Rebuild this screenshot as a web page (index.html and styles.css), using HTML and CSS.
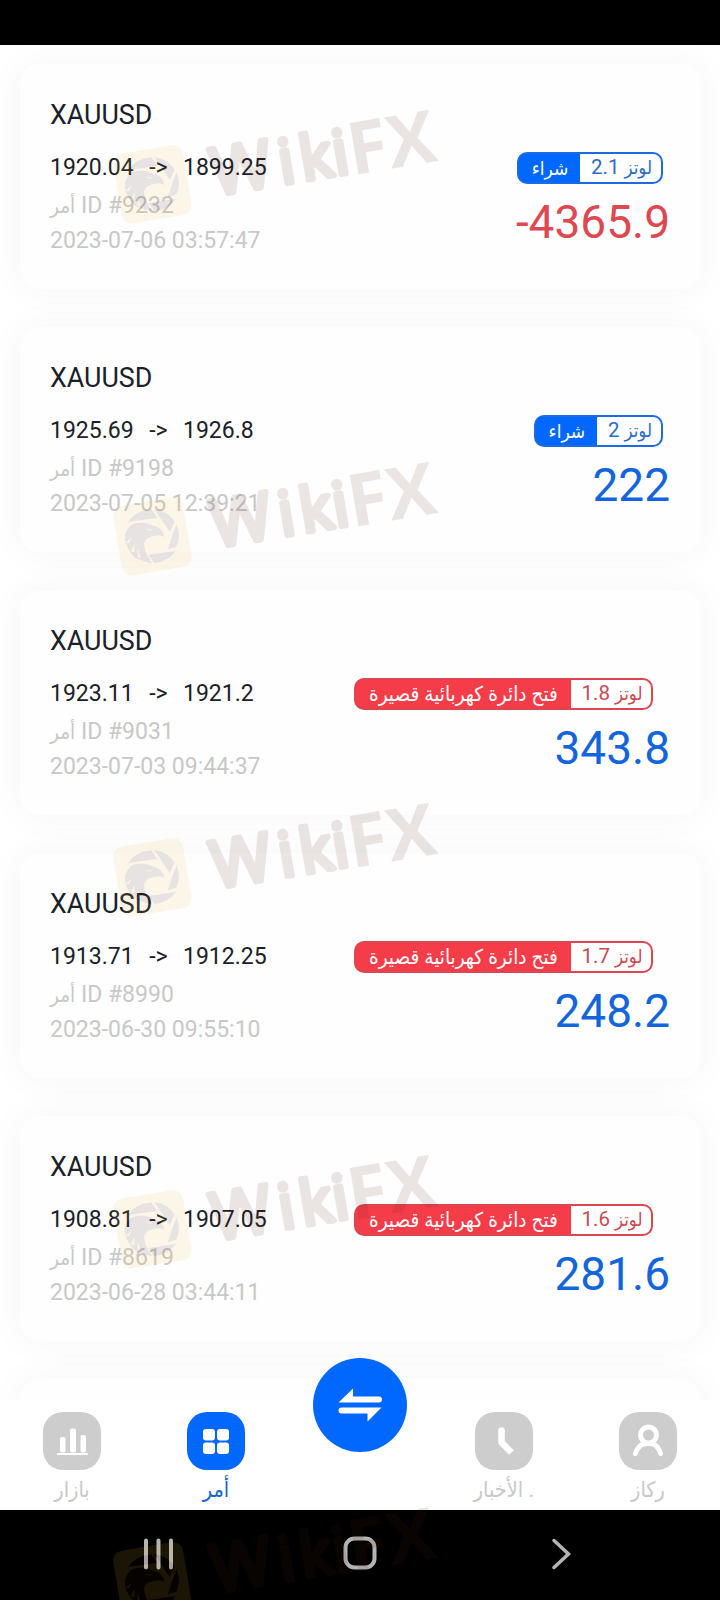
FILE: index.html
```
<!DOCTYPE html>
<html lang="ar">
<head>
    <meta charset="UTF-8">
    <meta name="viewport" content="width=device-width, initial-scale=1.0">
    <title>Orders</title>
    <link rel="stylesheet" href="styles.css">
</head>

<body>
    <svg class="defs">
        <symbol id="mark" viewBox="0 40 1080 400">
            <g opacity="0.11">
                <g transform="rotate(-9.5 157 290)">
                    <rect x="51" y="184" width="212" height="212" rx="30" fill="#f0be3c"/>
                </g>
                <g fill="#3c1418">
                    <path d="M84 247 Q106 213 154 209 L172 235 Z"/>
                    <path d="M163 208 Q203 213 224 246 L209 277 Z"/>
                    <path d="M229 253 Q245 290 229 321 L203 329 Z"/>
                    <path d="M146 346 L228 333 Q205 366 162 370 Z"/>
                    <path d="M75 286 Q82 253 112 250 Q134 245 155 256 Q188 262 193 292 Q180 283 163 289 Q134 294 132 312 Q133 340 156 370 Q134 369 118 358 Q108 362 90 336 Q72 312 75 286 Z"/>
                </g>
                <path d="M133 266 Q145 272 156 268 Q151 278 133 266 Z M77 309 L95 294 L86 311 Z M93 337 L103 311 L103 336 Z M113 356 L113 328 L122 352 Z" fill="#f0be3c"/>
                <g class="mark-text" transform="rotate(-9.5)">
                    <text class="round" y="376" font-size="196" x="287">W</text>
                    <text class="round" y="376" font-size="184" x="491">i</text>
                    <text class="round" y="376" font-size="184" x="555">k</text>
                    <text class="round" y="376" font-size="184" x="655">i</text>
                    <text class="heavy" y="384" font-size="218" x="702">F</text>
                    <text class="heavy" y="384" font-size="218" x="822">X</text>
                </g>
            </g>
        </symbol>
    </svg>

    <div class="phone">
        <div class="status-bar"></div>

        <div class="list">
            <div class="card">
                <div class="info">
                    <div class="symbol">XAUUSD</div>
                    <div class="prices"><span>1920.04</span><span>-&gt;</span><span>1899.25</span></div>
                    <div class="order"><span class="ar">أمر</span> ID #9232</div>
                    <div class="date">2023-07-06 03:57:47</div>
                </div>
                <div class="result">
                    <div class="badge buy">
                        <div class="side">شراء</div>
                        <div class="lots">2.1 <span class="ar">لوتز</span></div>
                    </div>
                    <div class="amount minus">-4365.9</div>
                </div>
            </div>

            <div class="card">
                <div class="info">
                    <div class="symbol">XAUUSD</div>
                    <div class="prices"><span>1925.69</span><span>-&gt;</span><span>1926.8</span></div>
                    <div class="order"><span class="ar">أمر</span> ID #9198</div>
                    <div class="date">2023-07-05 12:39:21</div>
                </div>
                <div class="result">
                    <div class="badge buy">
                        <div class="side">شراء</div>
                        <div class="lots">2 <span class="ar">لوتز</span></div>
                    </div>
                    <div class="amount">222</div>
                </div>
            </div>

            <div class="card">
                <div class="info">
                    <div class="symbol">XAUUSD</div>
                    <div class="prices"><span>1923.11</span><span>-&gt;</span><span>1921.2</span></div>
                    <div class="order"><span class="ar">أمر</span> ID #9031</div>
                    <div class="date">2023-07-03 09:44:37</div>
                </div>
                <div class="result">
                    <div class="badge sell">
                        <div class="side">فتح دائرة كهربائية قصيرة</div>
                        <div class="lots">1.8 <span class="ar">لوتز</span></div>
                    </div>
                    <div class="amount">343.8</div>
                </div>
            </div>

            <div class="card">
                <div class="info">
                    <div class="symbol">XAUUSD</div>
                    <div class="prices"><span>1913.71</span><span>-&gt;</span><span>1912.25</span></div>
                    <div class="order"><span class="ar">أمر</span> ID #8990</div>
                    <div class="date">2023-06-30 09:55:10</div>
                </div>
                <div class="result">
                    <div class="badge sell">
                        <div class="side">فتح دائرة كهربائية قصيرة</div>
                        <div class="lots">1.7 <span class="ar">لوتز</span></div>
                    </div>
                    <div class="amount">248.2</div>
                </div>
            </div>

            <div class="card">
                <div class="info">
                    <div class="symbol">XAUUSD</div>
                    <div class="prices"><span>1908.81</span><span>-&gt;</span><span>1907.05</span></div>
                    <div class="order"><span class="ar">أمر</span> ID #8619</div>
                    <div class="date">2023-06-28 03:44:11</div>
                </div>
                <div class="result">
                    <div class="badge sell">
                        <div class="side">فتح دائرة كهربائية قصيرة</div>
                        <div class="lots">1.6 <span class="ar">لوتز</span></div>
                    </div>
                    <div class="amount">281.6</div>
                </div>
            </div>

            <div class="card"></div>
        </div>

        <div class="nav">
            <div class="nav-item">
                <svg class="icon" viewBox="0 0 58 58" fill="#fff">
                    <rect x="17" y="25" width="5.5" height="15.5" rx="2"/>
                    <rect x="27" y="16.5" width="6" height="24" rx="2"/>
                    <rect x="37.5" y="23" width="5.5" height="17.5" rx="2"/>
                    <rect x="14" y="41" width="31" height="2" rx="1"/>
                </svg>
                <span>بازار</span>
            </div>
            <div class="nav-item active">
                <svg class="icon" viewBox="0 0 58 58" fill="#fff">
                    <rect x="16" y="17" width="12" height="11.5" rx="3"/>
                    <rect x="30" y="17" width="12" height="11.5" rx="3"/>
                    <rect x="16" y="30.5" width="12" height="11.5" rx="3"/>
                    <rect x="30" y="30.5" width="12" height="11.5" rx="3"/>
                </svg>
                <span>أمر</span>
            </div>
            <div class="nav-item">
                <svg class="fab" viewBox="0 0 94 94">
                    <circle cx="47" cy="47" r="47" fill="#0067ff"/>
                    <path d="M25.5 44.5 L40 30.5 V38.5 H66 Q69 38.5 69 41.5 Q69 44.5 66 44.5 Z M68.5 49.5 L54.5 63.5 V55.5 H28.5 Q25.5 55.5 25.5 52.5 Q25.5 49.5 28.5 49.5 Z" fill="#fff"/>
                </svg>
            </div>
            <div class="nav-item">
                <svg class="icon" viewBox="0 0 58 58" fill="none" stroke="#fff" stroke-width="6.5" stroke-linejoin="round">
                    <path d="M26.5 18 V30.5 L36.5 40.5"/>
                    <circle cx="26.5" cy="18.5" r="1.5" stroke-width="3.5"/>
                </svg>
                <span>الأخبار .</span>
            </div>
            <div class="nav-item">
                <svg class="icon" viewBox="0 0 58 58" fill="none" stroke="#fff" stroke-width="5" stroke-linecap="round">
                    <circle cx="29.5" cy="23" r="8"/>
                    <path d="M16.5 41.5 C20 32 25 31.5 29.5 31.5 C34 31.5 38 32 41.5 41.5"/>
                </svg>
                <span>ركاز</span>
            </div>
        </div>

        <div class="system-bar">
            <svg viewBox="0 0 36 36" width="36" height="36"><path d="M5 4.5 V31.5 M17.5 4.5 V31.5 M30 4.5 V31.5"/></svg>
            <svg viewBox="0 0 36 36" width="36" height="36"><rect x="2.5" y="2.5" width="29" height="29" rx="9"/></svg>
            <svg viewBox="0 0 36 36" width="36" height="36"><path d="M10 4.5 L24.5 18 L10 31.5" stroke-width="3.5"/></svg>
        </div>

        <div class="watermarks">
            <svg class="m1"><use href="#mark"/></svg>
            <svg class="m2"><use href="#mark"/></svg>
            <svg class="m3"><use href="#mark"/></svg>
            <svg class="m4"><use href="#mark"/></svg>
            <svg class="m5"><use href="#mark"/></svg>
        </div>
    </div>
</body>
</html>
```
FILE: styles.css
```
*{
    box-sizing: border-box;
}
body{
    margin: 0;
    background-color: #fff;
    font-family: Roboto, "DejaVu Sans Condensed", sans-serif;
}
.defs{
    display: none;
}
.phone{
    position: relative;
    display: flex;
    flex-direction: column;
    width: 720px;
    height: 1600px;
    overflow: hidden;
}
.status-bar{
    flex: none;
    height: 45px;
    background-color: #000;
}

/*orders list*/
.list{
    flex: 1;
    display: flex;
    flex-direction: column;
    gap: 38px;
    min-height: 0;
    padding: 19px 19px 0 20px;
    overflow: hidden;
}
.card{
    flex: none;
    display: flex;
    justify-content: space-between;
    height: 225px;
    padding: 31px 31px 0 30px;
    border-radius: 20px;
    background-color: #fefefe;
    box-shadow: 0 0 36px 4px rgba(0, 0, 0, 0.03);
}
.symbol{
    font-size: 26.8px;
    line-height: 40px;
    color: #1b2128;
}
.prices{
    display: flex;
    gap: 15.5px;
    margin-top: 12px;
    font-size: 23px;
    line-height: 42px;
    color: #1b2128;
}
.order, .date{
    height: 34px;
    font-size: 23px;
    line-height: 34px;
    color: #c8c8c8;
}
.date{
    line-height: 36px;
}
.ar{
    font-size: 20.5px;
    line-height: 1;
}
.result{
    display: flex;
    flex-direction: column;
    align-items: flex-end;
    padding-top: 57px;
}
.badge{
    display: flex;
    height: 32px;
    margin-right: 7.5px;
    border: 2px solid #1c6be0;
    border-radius: 10px;
    overflow: hidden;
}
.side{
    width: 61px;
    font-size: 19px;
    line-height: 29px;
    text-align: center;
    white-space: nowrap;
    color: #fff;
    background-color: #0067ff;
}
.lots{
    padding: 0 8.5px 0 10.5px;
    font-size: 20.5px;
    line-height: 26px;
    white-space: nowrap;
    color: #2a6cc8;
}
.lots .ar{
    font-size: 18.5px;
}
.buy{
    background: linear-gradient(to right, #0067ff 20px, #fff 20px);
}
.sell{
    margin-right: 17px;
    border-color: #dd4650;
    background: linear-gradient(to right, #f53d49 20px, #fff 20px);
}
.sell .side{
    width: 215px;
    font-size: 20.5px;
    background-color: #f53d49;
}
.sell .lots{
    color: #cc4a52;
}
.amount{
    margin-top: 11px;
    font-size: 46px;
    line-height: 54px;
    color: #1265dc;
}
.minus{
    color: #dd4851;
}

/*bottom navigation*/
.nav{
    flex: none;
    display: flex;
    height: 110px;
    background-color: #fff;
}
.nav-item{
    flex: 1;
    display: flex;
    flex-direction: column;
    align-items: center;
    padding-top: 12px;
    font-size: 21.5px;
    color: #c8c8c8;
}
.nav-item span{
    margin-top: 6px;
    line-height: 28px;
}
.icon{
    width: 58px;
    height: 58px;
    border-radius: 20px;
    background-color: #cdcdcd;
}
.active{
    color: #1766d0;
}
.active .icon{
    background-color: #0067ff;
}
.fab{
    flex: none;
    z-index: 1;
    width: 94px;
    height: 94px;
    margin-top: -54px;
}
.system-bar{
    flex: none;
    display: flex;
    justify-content: space-between;
    height: 90px;
    padding: 26px 140px 0 141px;
    background-color: #000;
}
.system-bar svg{
    fill: none;
    stroke: #b4b4b4;
    stroke-width: 4;
    stroke-linecap: round;
}

/*watermark over the whole screen*/
.watermarks svg{
    position: absolute;
    left: 100px;
    z-index: 2;
    width: 360px;
    height: 133.3px;
}
.m1{
    top: 101px;
}
.m2{
    top: 453.3px;
}
.m3{
    top: 794.3px;
}
.m4{
    top: 1146px;
}
.m5{
    top: 1498px;
}
.mark-text{
    fill: #501e0f;
    font-family: "Open Sans", sans-serif;
}
.round{
    stroke: #501e0f;
    stroke-width: 16;
    stroke-linejoin: round;
}
.heavy{
    font-weight: bold;
}
```
